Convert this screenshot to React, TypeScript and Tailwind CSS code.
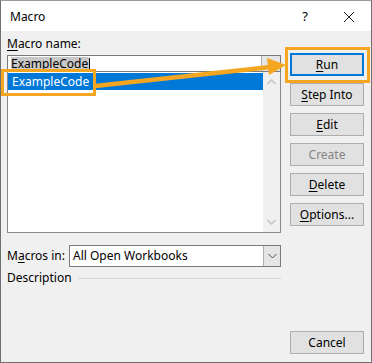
import React from "react";

const font = { fontFamily: '"Noto Sans", "Liberation Sans", sans-serif' };

function Btn({ children, disabled, primary }: { children: React.ReactNode; disabled?: boolean; primary?: boolean }) {
  return (
    <div
      className={`h-[23px] w-[74px] flex items-center justify-center text-[12px] bg-[#e1e1e1] ${
        primary ? "border-2 border-[#0078d7]" : "border border-[#adadad]"
      } ${disabled ? "text-[#838383]" : "text-black"}`}
    >
      {children}
    </div>
  );
}

export default function App() {
  return (
    <div className="relative w-[372px] h-[363px] bg-[#f0f0f0] border border-[#707070] border-t-[#9a9a9a] flex flex-col overflow-hidden" style={font}>
      {/* title bar */}
      <div className="h-[30px] bg-white flex items-center shrink-0">
        <span className="ml-[9px] mt-[1px] text-[12px] text-black">Macro</span>
        <span className="ml-auto mr-[35px] mt-[1px] text-[13px] text-black">?</span>
        <svg width="12" height="12" viewBox="0 0 12 12" className="mr-[16px] mt-[1px]">
          <path d="M1 1 L11 11 M11 1 L1 11" stroke="#222" strokeWidth="1" fill="none" />
        </svg>
      </div>

      {/* body */}
      <div className="flex flex-1 pl-[6px]">
        {/* left column */}
        <div className="w-[274px] flex flex-col pt-[5px]">
          <div className="h-[16px] leading-[16px] text-[12px] text-black">
            <u className="underline-offset-2">M</u>acro name:
          </div>
          <div className="mt-[3px] h-[17px] border border-[#7a7a7a] bg-white flex items-center">
            <div className="ml-[3px] h-[13px] bg-[#c8c8c8] flex items-center text-[12px] leading-[13px] text-black pr-[1px]">ExampleCode</div>
            <div className="w-px h-[12px] bg-black" />
            <div className="ml-auto w-[19px] h-full border-l border-[#adadad] bg-[#e6e6e6] flex items-center justify-center">
              <svg width="10" height="10" viewBox="0 0 10 10">
                <path d="M2 7 L5 2 L8 7 L6 6 L6.5 9 L3.5 9 L4 6 Z" fill="#000" />
              </svg>
            </div>
          </div>
          <div className="h-[161px] border border-t-0 border-[#8a8a8a] bg-white flex">
            <div className="flex-1 pt-[1px]">
              <div className="h-[17px] bg-[#0078d7] text-white text-[12px] leading-[17px] pl-[4px]">ExampleCode</div>
            </div>
            <div className="w-[17px] bg-[#f0f0f0] flex flex-col items-center justify-between py-[7px]">
              <svg width="9" height="6" viewBox="0 0 9 6">
                <path d="M0.5 5 L4.5 1 L8.5 5" stroke="#c2c2c2" strokeWidth="1.3" fill="none" />
              </svg>
              <svg width="9" height="6" viewBox="0 0 9 6">
                <path d="M0.5 1 L4.5 5 L8.5 1" stroke="#c2c2c2" strokeWidth="1.3" fill="none" />
              </svg>
            </div>
          </div>
          <div className="mt-[12px] flex items-center">
            <div className="w-[62px] text-[12px] text-black">
              M<u className="underline-offset-2">a</u>cros in:
            </div>
            <div className="flex-1 h-[22px] border border-[#7a7a7a] bg-white flex items-center">
              <span className="ml-[3px] text-[12px] text-black">All Open Workbooks</span>
              <div className="ml-auto w-[17px] h-full border-l border-[#adadad] bg-[#e5e5e5] flex items-center justify-center">
                <svg width="9" height="6" viewBox="0 0 9 6">
                  <path d="M0.5 1 L4.5 5 L8.5 1" stroke="#505050" strokeWidth="1" fill="none" />
                </svg>
              </div>
            </div>
          </div>
          <div className="mt-[2px] h-[18px] flex items-center">
            <span className="text-[12px] text-black">Description</span>
            <div className="flex-1 ml-[6px] h-px bg-[#d5d5d5]" />
          </div>
        </div>

        {/* right column */}
        <div className="ml-[9px] w-[74px] flex flex-col pt-[22px] pb-[8px]">
          <div className="flex flex-col gap-[7px]">
            <Btn primary>
              <u className="underline-offset-2">R</u>un
            </Btn>
            <Btn>
              <u className="underline-offset-2">S</u>tep Into
            </Btn>
            <Btn>
              <u className="underline-offset-2">E</u>dit
            </Btn>
            <Btn disabled>Create</Btn>
            <Btn>
              <u className="underline-offset-2">D</u>elete
            </Btn>
            <Btn>
              <u className="underline-offset-2">O</u>ptions...
            </Btn>
          </div>
          <div className="mt-auto">
            <Btn>Cancel</Btn>
          </div>
        </div>
      </div>

      {/* annotations */}
      <div className="absolute left-[0px] top-[68px] w-[95px] h-[27px] border-[3px] border-[#f4a620]" />
      <div className="absolute left-[284px] top-[46px] w-[85px] h-[36px] border-[3px] border-[#f4a620]" />
      <svg className="absolute left-0 top-0 pointer-events-none" width="372" height="363" viewBox="0 0 372 363">
        <line x1="94" y1="85" x2="270" y2="66" stroke="#f4a620" strokeWidth="4.5" />
        <polygon points="266,57 285,64 268,74" fill="#f4a620" />
      </svg>
    </div>
  );
}
